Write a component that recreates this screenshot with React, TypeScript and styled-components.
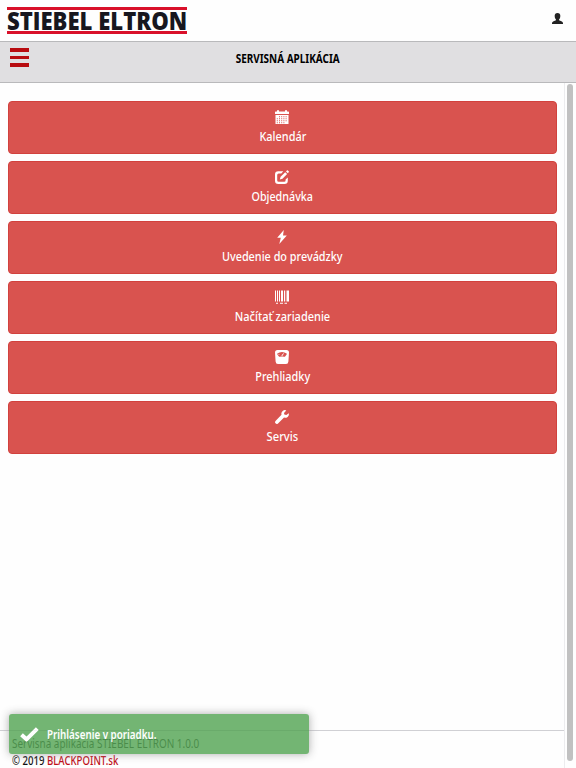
import React from "react";
import styled, { createGlobalStyle } from "styled-components";

const GlobalStyle = createGlobalStyle`
    * {
        box-sizing: border-box;
    }
    body {
        margin: 0;
        background-color: #fefefe;
        font-family: "Noto Sans", "Open Sans", sans-serif;
        font-size: 13px;
        color: #111;
    }
`

const CalendarIcon = () => (
    <Icon viewBox="0 0 14 14">
        <path d="M0 4V2.200Q0 1.500.7 1.500H2V.3h2v1.200h6V.3h2v1.200h1.300q.7 0 .7.700V4z" />
        <path fillRule="evenodd" d="M.5 5h13v9H.5zM4 6.200v1h1v-1zm2.200 0v1h1v-1zm2.200 0v1h1v-1zm2.200 0v1h1v-1zM1.800 8.200v1h1v-1zm2.200 0v1h1v-1zm2.200 0v1h1v-1zm2.200 0v1h1v-1zm2.200 0v1h1v-1zM1.800 10.200v1h1v-1zm2.200 0v1h1v-1zm2.200 0v1h1v-1zm2.200 0v1h1v-1zm2.200 0v1h1v-1zM1.800 12.200v1h1v-1zm2.200 0v1h1v-1zm2.200 0v1h1v-1zm2.200 0v1h1v-1z" />
    </Icon>
);

const EditIcon = () => (
    <Icon viewBox="0 0 14 14">
        <path d="M8.300 1.200H3.300Q0 1.200 0 4.500v6.200Q0 14 3.300 14h6.200q3.300 0 3.300-3.300V7.500l-2.200 2.100v.7q0 1.500-1.500 1.500H3.700q-1.500 0-1.500-1.500V4.900q0-1.500 1.500-1.500h2.600z" />
        <path d="M10.200 2.200l1.900 1.900-4.600 4.600-2.700.8.800-2.700zM11 1.400l.9-.9q.5-.4 1 0l.8.8q.5.500 0 1l-.9.900z" />
    </Icon>
);

const FlashIcon = () => (
    <Icon viewBox="0 0 14 14">
        <path d="M8.800 0L2.200 7.800h3.600L4.300 14l7.500-8.500H8z" />
    </Icon>
);

const BarcodeIcon = () => (
    <Icon viewBox="0 0 14 14">
        <path d="M0 .5h1v11H0zM2 .5h1v11H2zM4 .5h1v11H4zM6 .5h2v11H6zM9 .5h1.200v11H9zM11.500 .5H14v11h-2.500zM1 12.700h2v1H1zM5 12.700h3v1H5zM9.500 12.700H12v1H9.500z" />
    </Icon>
);

const ScaleIcon = () => (
    <Icon viewBox="0 0 14 14">
        <path fillRule="evenodd" d="M2.500 0h9Q14 0 14 2.500l-.6 9Q13.200 14 11 14H3Q.8 14 .6 11.500L0 2.500Q0 0 2.500 0zM7 1.900q-2.700 0-4.600 1.700-.4.400 0 .9l1.500 2q.3.400.9.200Q7 6.100 9.200 6.700q.6.200.9-.2l1.500-2q.4-.5 0-.9Q9.700 1.900 7 1.900z" />
        <path d="M9.400 2.600L7.600 5.700H6.300l.4-.8zM3.700 3.800l.9.900-.5.400-.8-.8z" />
    </Icon>
);

const WrenchIcon = () => (
    <Icon viewBox="0 0 14 14">
        <path d="M13.800 3.300L11.300 5 9.300 4.600 9 3l2.300-2.600Q9.500-.4 7.700.9 5.900 2.300 6.500 4.700L.5 10.900q-1 1.300 0 2.400 1.200 1.200 2.500.1l6-5.800q2 .5 3.600-.7 1.700-1.400 1.200-3.600z" />
    </Icon>
);

const UserIcon = () => (
    <svg width="11" height="11" viewBox="0 0 12 11" preserveAspectRatio="none" fill="#222">
        <path d="M6 0Q2.900 0 2.900 2.900q0 2.400 1.400 3.500v.8L1.200 8.500Q0 9 0 10.200v.8h12v-.8Q12 9 10.800 8.500L7.700 7.200v-.8q1.400-1.100 1.400-3.500Q9.100 0 6 0z" />
    </svg>
);

const CheckIcon = () => (
    <svg width="19" height="15" viewBox="0 0 19 15">
        <path d="M1.500 7.700l5 4.600L17.300 1.600" fill="none" stroke="#fff" strokeWidth="4" />
    </svg>
);

const menu = [
    { title: "Kalendár", icon: <CalendarIcon />, scale: 0.84 },
    { title: "Objednávka", icon: <EditIcon />, scale: 0.825 },
    { title: "Uvedenie do prevádzky", icon: <FlashIcon />, scale: 0.835 },
    { title: "Načítať zariadenie", icon: <BarcodeIcon />, scale: 0.845 },
    { title: "Prehliadky", icon: <ScaleIcon />, scale: 0.84 },
    { title: "Servis", icon: <WrenchIcon />, scale: 0.86 },
];

const App = () => {
    return (
        <Wrapper>
            <GlobalStyle />
            <Header>
                <Logo>
                    <LogoText $scale={0.92}>STIEBEL ELTRON</LogoText>
                </Logo>
                <UserIcon />
            </Header>
            <TitleBar>
                <Hamburger aria-label="Menu">
                    <Line />
                    <Line />
                    <Line />
                </Hamburger>
                <Title>
                    <Text $scale={0.83}>SERVISNÁ APLIKÁCIA</Text>
                </Title>
            </TitleBar>
            <Body>
                <Content>
                    <Menu>
                        {
                            menu.map(item => (
                                <MenuButton key={item.title}>
                                    {item.icon}
                                    <Text $scale={item.scale}>{item.title}</Text>
                                </MenuButton>
                            ))
                        }
                    </Menu>
                    <Footer>
                        <FooterLine>
                            <Text $scale={0.828} $left>Servisná aplikácia STIEBEL ELTRON 1.0.0</Text>
                        </FooterLine>
                        <FooterLine $dark>
                            <Text $scale={0.8} $left>© 2019 <Company>BLACKPOINT.sk</Company></Text>
                        </FooterLine>
                    </Footer>
                </Content>
                <Scrollbar>
                    <Thumb />
                </Scrollbar>
            </Body>
            <Toast>
                <CheckIcon />
                <Text $scale={0.817} $left>Prihlásenie v poriadku.</Text>
            </Toast>
        </Wrapper>
    );
};

const Wrapper = styled.div`
    position: relative;
    display: flex;
    flex-direction: column;
    width: 576px;
    height: 768px;
    overflow: hidden;
`

const Text = styled.span<{$scale: number, $left?: boolean}>`
    display: inline-block;
    white-space: nowrap;
    transform: scaleX(${props => props.$scale});
    transform-origin: ${props => props.$left ? "left" : "center"};
`

const Icon = styled.svg`
    display: block;
    width: 14px;
    height: 14px;
    margin-right: 1px;
    fill: #fff;
`

const Header = styled.header`
    display: flex;
    justify-content: space-between;
    height: 41px;
    padding: 7px 13.500px 0 7px;
    svg {
        margin-top: 6px;
    }
`

const Logo = styled.div`
    width: 180px;
    height: 27px;
    border-top: 3px solid #d9102a;
    border-bottom: 3px solid #d9102a;
`

const LogoText = styled.div<{$scale: number}>`
    width: max-content;
    color: #17171f;
    font-family: "Open Sans", sans-serif;
    font-size: 24px;
    font-weight: 800;
    line-height: 21px;
    transform: scaleX(${props => props.$scale});
    transform-origin: left;
`

const TitleBar = styled.div`
    display: flex;
    height: 42px;
    background-color: #e0dfe1;
    border-top: 1px solid #b9b9bb;
    border-bottom: 1px solid #b9b9bb;
`

const Hamburger = styled.button`
    display: flex;
    flex-direction: column;
    gap: 4px;
    width: 30px;
    padding: 6px 0 0 10px;
    border: 0;
    background: none;
`

const Line = styled.span`
    width: 19px;
    height: 3.600px;
    background-color: #b80c10;
`

const Title = styled.h1`
    flex: 1;
    margin: 0 30px 0 0;
    color: #000;
    font-size: 12px;
    font-weight: 700;
    line-height: 34px;
    text-align: center;
`

const Body = styled.div`
    display: flex;
    flex: 1;
    min-height: 0;
`

const Content = styled.main`
    display: flex;
    flex: 1;
    flex-direction: column;
    justify-content: space-between;
`

const Menu = styled.nav`
    display: flex;
    flex-direction: column;
    gap: 7px;
    padding: 18px 7px 0 8px;
`

const MenuButton = styled.button`
    display: flex;
    flex-direction: column;
    align-items: center;
    height: 53px;
    padding: 8px 0 0;
    border: 1px solid #d2413d;
    border-radius: 4px;
    background-color: #d9534f;
    color: #fff;
    font-family: inherit;
    font-size: 13px;
    font-weight: 500;
    line-height: 24px;
`

const Footer = styled.footer`
    height: 38px;
    padding: 4px 0 0 12px;
    border-top: 1px solid #d0d0d4;
`

const FooterLine = styled.div<{$dark?: boolean}>`
    color: ${props => props.$dark ? "#111" : "#333"};
    font-size: 12px;
    font-weight: ${props => props.$dark ? 500 : 400};
    line-height: 17px;
`

const Company = styled.span`
    color: #c00d18;
`

const Scrollbar = styled.div`
    width: 12px;
    padding: 1px 3px 0 2px;
    border-left: 1px solid #ececee;
`

const Thumb = styled.div`
    height: 677px;
    border-radius: 3px;
    background-color: #c1c1c1;
`

const Toast = styled.div`
    position: absolute;
    left: 9px;
    bottom: 14px;
    display: flex;
    align-items: center;
    gap: 8px;
    width: 300px;
    height: 40px;
    padding-left: 11px;
    border-radius: 3px;
    background-color: #51a351;
    box-shadow: 0 0 8px #999;
    color: #fff;
    font-size: 12px;
    font-weight: 600;
    opacity: 0.8;
`

export default App;
